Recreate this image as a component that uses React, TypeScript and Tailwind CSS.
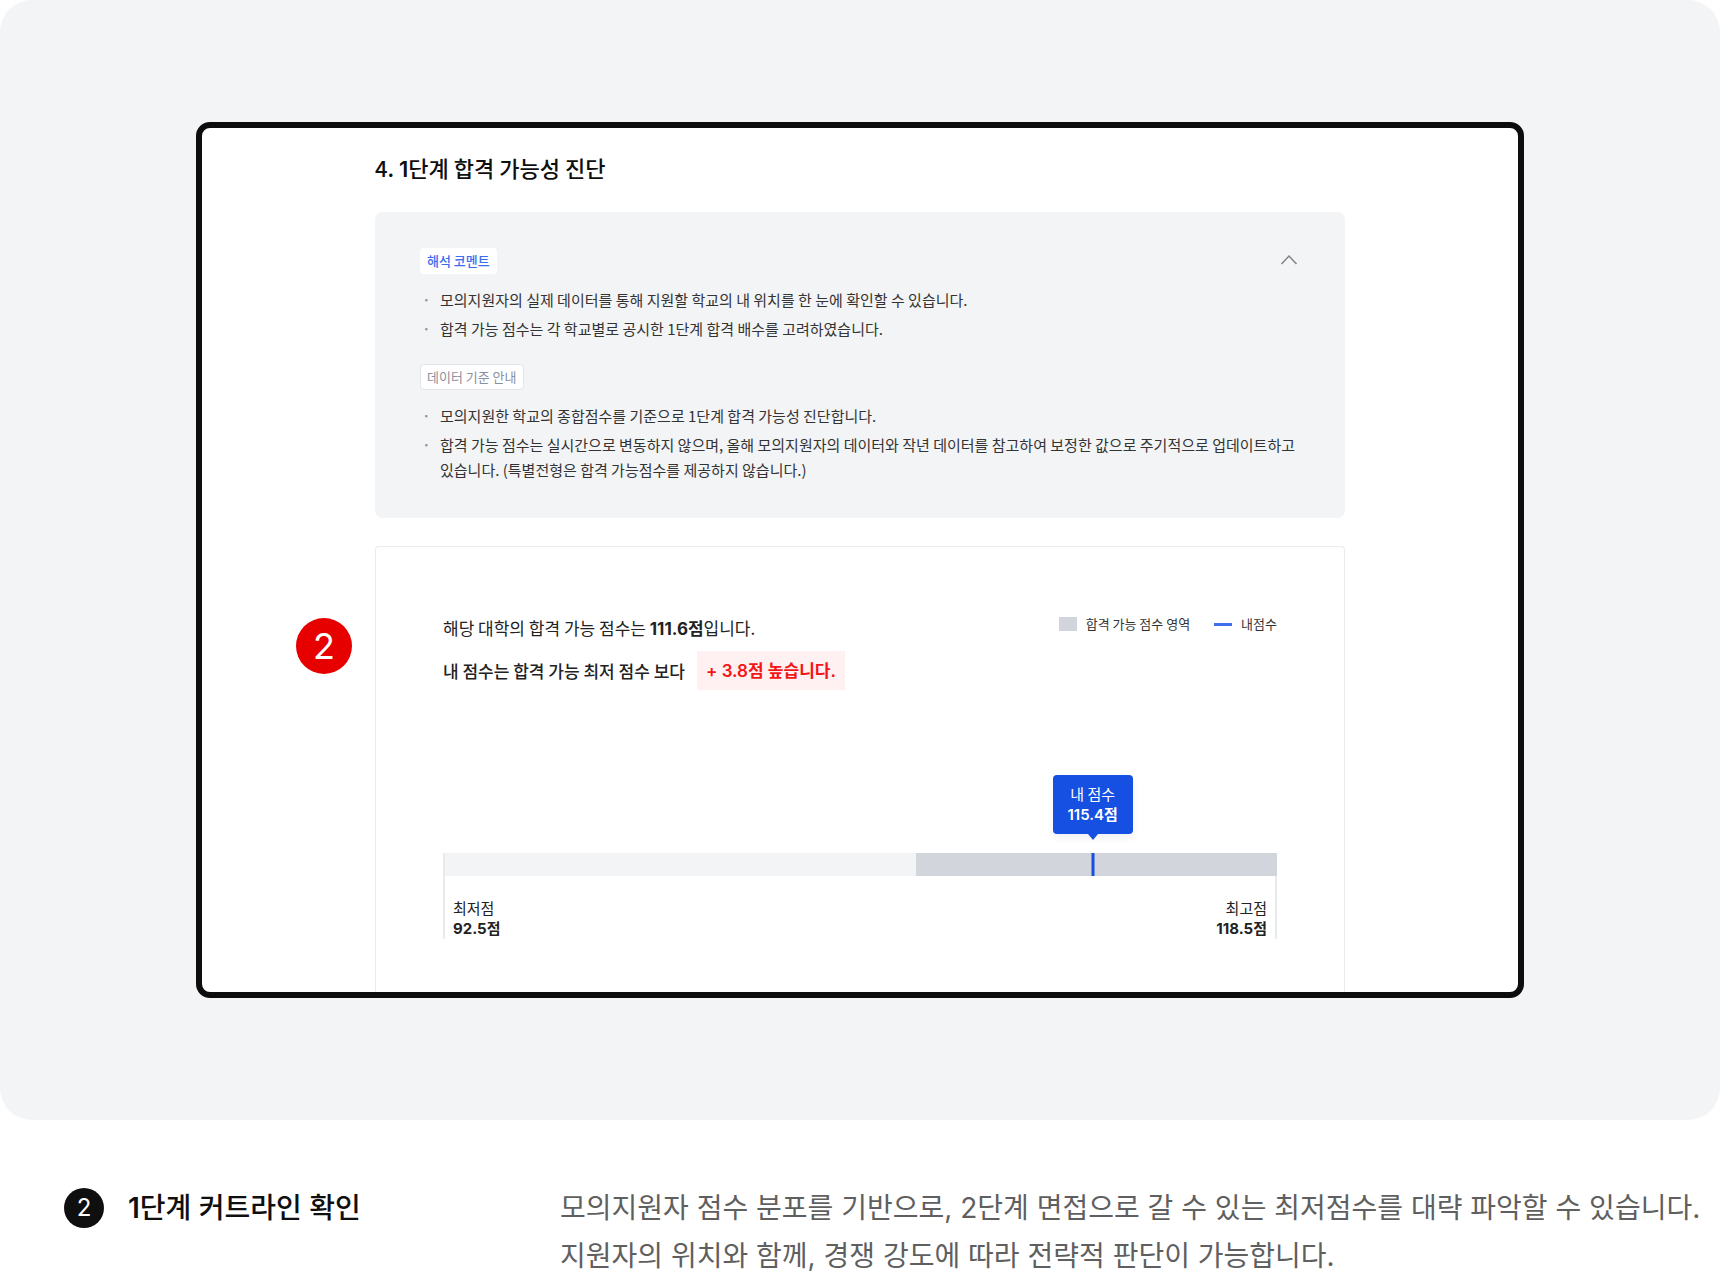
import { useState } from 'react';
import type { ReactNode } from 'react';

const comments = [
  '모의지원자의 실제 데이터를 통해 지원할 학교의 내 위치를 한 눈에 확인할 수 있습니다.',
  '합격 가능 점수는 각 학교별로 공시한 1단계 합격 배수를 고려하였습니다.',
];

const criteria = [
  '모의지원한 학교의 종합점수를 기준으로 1단계 합격 가능성 진단합니다.',
  '합격 가능 점수는 실시간으로 변동하지 않으며, 올해 모의지원자의 데이터와 작년 데이터를 참고하여 보정한 값으로 주기적으로 업데이트하고 있습니다. (특별전형은 합격 가능점수를 제공하지 않습니다.)',
];

// positions on the bar, in percent of its width
const chart = { passFrom: 56.6, mine: 77.9 };

function Num({ children }: { children: ReactNode }) {
  return <span className="font-['Inter','Noto_Sans_CJK_KR',sans-serif]">{children}</span>;
}

function Notes({ items }: { items: string[] }) {
  return (
    <ul className="mt-[13px] flex flex-col gap-1 text-[15px] leading-[25px] text-[#333333]">
      {items.map((item) => (
        <li key={item} className="flex">
          <span className="w-5 shrink-0 pl-0.5 font-medium text-[#8b90a0]">·</span>
          <span className="break-keep">{item}</span>
        </li>
      ))}
    </ul>
  );
}

function CommentBox() {
  const [open, setOpen] = useState(true);
  return (
    <div className="rounded-lg bg-[#f3f4f6] pt-9 pr-8 pb-9 pl-[45px]">
      <div className="flex items-start justify-between">
        <span className="rounded bg-white px-[7px] text-[13px] leading-[26px] font-medium text-[#3b6cf0]">해석 코멘트</span>
        <button
          type="button"
          aria-label="접기"
          aria-expanded={open}
          onClick={() => setOpen(!open)}
          className="mr-3 flex h-6 w-6 items-center justify-center"
        >
          <svg width="18" height="12" viewBox="0 0 18 12" fill="none" stroke="#808387" strokeWidth="1.5">
            <path d="M1.5 10 9 2l7.5 8" />
          </svg>
        </button>
      </div>
      {open && (
        <>
          <Notes items={comments} />
          <div className="mt-[23px] flex">
            <span className="rounded border border-[#e3e5e9] bg-white px-1.5 text-[13px] leading-6 text-[#8b90a0]">데이터 기준 안내</span>
          </div>
          <Notes items={criteria} />
        </>
      )}
    </div>
  );
}

function Legend() {
  return (
    <div className="mt-0.5 flex items-center text-[13px] leading-5 text-[#333333]">
      <span className="mr-[9px] h-3.5 w-[18px] bg-[#d2d5dc]" />
      <span>합격 가능 점수 영역</span>
      <span className="mr-[9px] ml-6 h-[3px] w-[18px] bg-[#3f6fec]" />
      <span>내점수</span>
    </div>
  );
}

function ScoreBar() {
  return (
    <div className="relative">
      <div className="flex h-[23px] border-l-2 border-[#e8eaee] bg-[#f3f4f6]">
        <div className="ml-auto bg-[#d2d5dc]" style={{ width: `${100 - chart.passFrom}%` }} />
      </div>
      <div className="absolute bottom-full mb-[19px] flex -translate-x-1/2 flex-col items-center" style={{ left: `${chart.mine}%` }}>
        <div className="w-20 rounded bg-[#1650e2] py-[9px] text-center text-[15px] leading-5 text-white shadow-[0_4px_8px_rgba(0,0,0,0.06)]">
          <div>내 점수</div>
          <div className="font-semibold"><Num>115.4점</Num></div>
        </div>
        <svg className="absolute top-full" width="10" height="6" viewBox="0 0 10 6" fill="#1650e2">
          <path d="M0 0h10L5 6z" />
        </svg>
      </div>
      <div className="absolute top-0 h-[23px] w-[3px] -translate-x-1/2 bg-[#1650e2]" style={{ left: `${chart.mine}%` }} />
    </div>
  );
}

function ScoreCard() {
  return (
    <div className="mt-7 rounded-t border border-b-0 border-[#e9ebee] px-[67px] pt-[65px] pb-[53px]">
      <div className="flex items-start justify-between">
        <div className="text-[17px] text-[#222222]">
          <p className="leading-8">
            해당 대학의 합격 가능 점수는 <b className="font-bold"><Num>111.6점</Num></b>입니다.
          </p>
          <p className="mt-1.5 flex items-center font-medium">
            내 점수는 합격 가능 최저 점수 보다
            <strong className="ml-3 bg-[#fff0f1] px-[9px] leading-[38px] font-semibold text-[#f31616]"><Num>+ 3.8점 높습니다.</Num></strong>
          </p>
        </div>
        <Legend />
      </div>
      <div className="mt-[163px]">
        <ScoreBar />
        <div className="flex justify-between border-x-2 border-[#e8eaee] px-2 pt-[22px] text-[15px] leading-5 text-[#222222]">
          <div>
            <div>최저점</div>
            <div className="font-bold"><Num>92.5점</Num></div>
          </div>
          <div className="text-right">
            <div>최고점</div>
            <div className="font-bold"><Num>118.5점</Num></div>
          </div>
        </div>
      </div>
    </div>
  );
}

export default function App() {
  return (
    <main className="bg-white font-['Noto_Sans_CJK_KR',sans-serif] text-[#0f0f10]">
      <section className="rounded-[32px] bg-[#f3f4f6] px-[196px] py-[122px]">
        <div className="relative overflow-hidden rounded-[14px] border-[6px] border-[#0d0d0e] bg-white px-[173px] pt-6">
          <h2 className="mb-7 text-[22px] leading-[30px] font-medium">4. <b className="font-semibold"><Num>1</Num></b>단계 합격 가능성 진단</h2>
          <CommentBox />
          <ScoreCard />
          <span className="absolute top-[490px] left-[94px] flex h-14 w-14 items-center justify-center rounded-full bg-[#e60000] text-4xl text-white">
            <Num>2</Num>
          </span>
        </div>
      </section>
      <section className="flex items-start px-16 pt-16 font-['Inter','Noto_Sans_CJK_KR',sans-serif]">
        <div className="flex h-12 w-[496px] shrink-0 items-center">
          <span className="mr-6 flex h-10 w-10 items-center justify-center rounded-full bg-[#0f0f10] text-2xl text-white">2</span>
          <h3 className="text-[28px] leading-[48px] font-medium"><b className="font-semibold">1</b>단계 커트라인 확인</h3>
        </div>
        <p className="-mr-16 text-[28px] leading-[48px] break-keep text-[#5f5f5f]">
          모의지원자 점수 분포를 기반으로, 2단계 면접으로 갈 수 있는 최저점수를 대략 파악할 수 있습니다.
          <br />
          지원자의 위치와 함께, 경쟁 강도에 따라 전략적 판단이 가능합니다.
        </p>
      </section>
    </main>
  );
}
